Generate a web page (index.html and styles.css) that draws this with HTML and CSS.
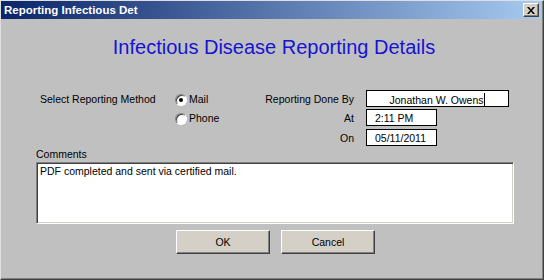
FILE: index.html
```html
<!DOCTYPE html>
<html>

<head>
    <link rel="stylesheet" href="styles.css">
</head>

<body>
    <div class="window">
        <div class="titlebar">
            <span class="title">Reporting Infectious Det</span>
            <span class="close-btn">
                <svg width="8" height="7" viewBox="0 0 8 7">
                    <path d="M0 0h2l2 2.4L6 0h2L5 3.5 8 7H6L4 4.6 2 7H0l3-3.5z" fill="#000" />
                </svg>
            </span>
        </div>
        <div class="content">
            <h1 class="heading">Infectious Disease Reporting Details</h1>

            <div class="details">
                <div class="method-label">Select Reporting Method</div>
                <div class="methods">
                    <div class="option"><span class="radio checked"></span>Mail</div>
                    <div class="option"><span class="radio"></span>Phone</div>
                </div>
                <div class="report-grid">
                    <span class="field-label">Reporting Done By</span>
                    <span class="field wide">Jonathan W. Owens<span class="caret"></span></span>
                    <span class="field-label">At</span>
                    <span class="field short">2:11 PM</span>
                    <span class="field-label">On</span>
                    <span class="field short">05/11/2011</span>
                </div>
            </div>

            <div class="comments-label">Comments</div>
            <div class="comments">PDF completed and sent via certified mail.</div>

            <div class="buttons">
                <button class="btn">OK</button>
                <button class="btn">Cancel</button>
            </div>
        </div>
    </div>
</body>

</html>
```

FILE: styles.css
```css
body {
    margin: 0;
    font-family: "Liberation Sans", Arial, sans-serif;
    font-size: 10.5px;
    color: #000;
}

.window {
    width: 544px;
    height: 280px;
    box-sizing: border-box;
    background-color: #c0c0c0;
    border: 1px solid;
    border-color: #dfdfdf #404040 #404040 #dfdfdf;
    box-shadow: inset -1px -1px 0 #808080;
    padding: 0 2px 2px 0;
}

.titlebar {
    height: 18px;
    display: flex;
    align-items: center;
    justify-content: space-between;
    background: linear-gradient(to right, #0a246a, #a6caf0);
    padding: 0 2px 0 3px;
}

.title {
    color: white;
    font-weight: bold;
    font-size: 11.5px;
}

.close-btn {
    width: 16px;
    height: 14px;
    box-sizing: border-box;
    display: flex;
    align-items: center;
    justify-content: center;
    background-color: #d4d0c8;
    border: 1px solid;
    border-color: #fff #404040 #404040 #fff;
    box-shadow: inset -1px -1px 0 #808080;
}

.heading {
    margin: 17px 0 0 0;
    padding-left: 6px;
    font-size: 20px;
    font-weight: normal;
    line-height: 23px;
    text-align: center;
    color: #1414d4;
}

.details {
    display: flex;
    margin-top: 31px;
    padding-left: 39px;
}

.method-label {
    width: 135px;
    padding-top: 3px;
    line-height: 12px;
    white-space: nowrap;
}

.methods {
    width: 85px;
}

.option {
    display: flex;
    gap: 2px;
    height: 19px;
    box-sizing: border-box;
    padding-top: 3px;
    line-height: 12px;
}

.radio {
    position: relative;
    width: 12px;
    height: 12px;
    box-sizing: border-box;
    margin-top: 1px;
    border-radius: 50%;
    background-color: #fff;
    border: 1px solid;
    border-color: #808080 #fff #fff #808080;
    box-shadow: inset 1px 1px 0 #404040;
}

.radio.checked::after {
    content: "";
    position: absolute;
    left: 3px;
    top: 3px;
    width: 4px;
    height: 4px;
    border-radius: 50%;
    background-color: #000;
}

.report-grid {
    display: grid;
    grid-template-columns: 94px 143px;
    grid-template-rows: 19px 20px 17px;
    column-gap: 12px;
}

.field-label {
    text-align: right;
    padding-top: 3px;
    line-height: 12px;
    white-space: nowrap;
}

.field {
    height: 17px;
    box-sizing: border-box;
    border: 1px solid #000;
    background-color: #fff;
    padding-top: 2px;
    line-height: 12px;
    white-space: nowrap;
}

.field.wide {
    text-align: center;
}

.field.short {
    width: 71px;
    padding-left: 8px;
}

.caret {
    display: inline-block;
    width: 1px;
    height: 14px;
    margin-left: 1px;
    vertical-align: -3px;
    background-color: #000;
}

.comments-label {
    margin-top: 2px;
    padding-left: 35px;
    line-height: 12px;
}

.comments {
    margin: 2px 0 0 35px;
    width: 478px;
    height: 62px;
    box-sizing: border-box;
    background-color: #fff;
    border: 1px solid;
    border-color: #808080 #fff #fff #808080;
    box-shadow: inset 1px 1px 0 #404040, inset -1px -1px 0 #d4d0c8;
    padding: 2px 3px;
    line-height: 12px;
}

.buttons {
    display: flex;
    gap: 11px;
    margin-top: 6px;
    padding-left: 175px;
}

.btn {
    width: 94px;
    height: 24px;
    background-color: #d4d0c8;
    border: 1px solid;
    border-color: #fff #404040 #404040 #fff;
    box-shadow: inset -1px -1px 0 #808080;
    font-family: "Liberation Sans", Arial, sans-serif;
    font-size: 10.5px;
    color: #000;
    padding: 0;
}
```
